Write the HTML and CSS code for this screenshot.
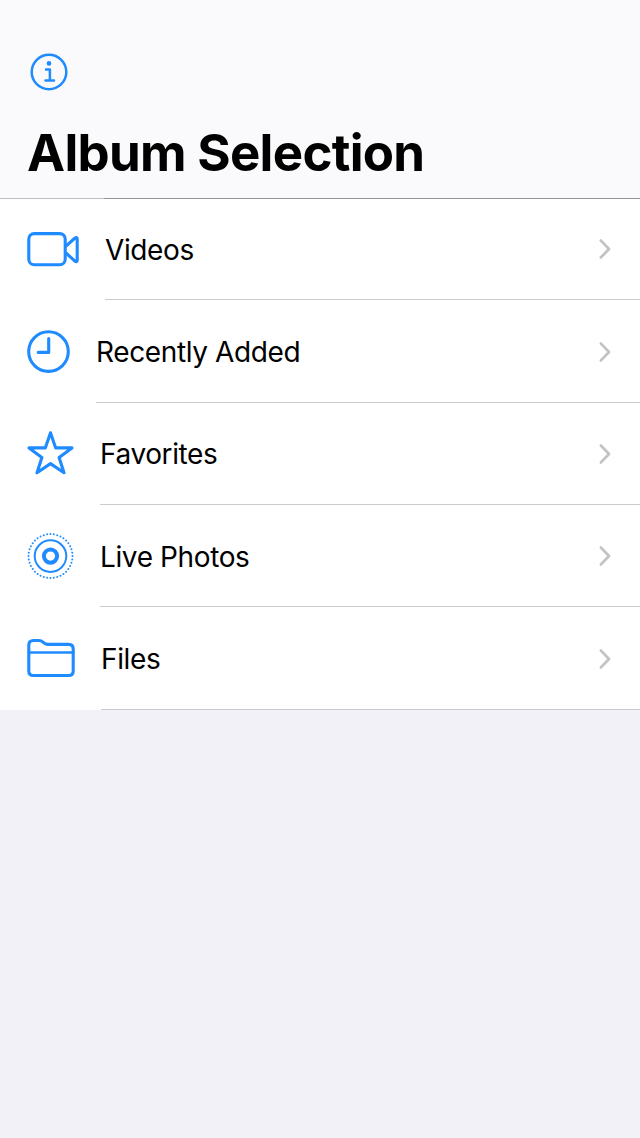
FILE: index.html
```html
<!DOCTYPE html>
<html lang="en">
<head>
<meta charset="utf-8">
<title>Album Selection</title>
<link rel="stylesheet" href="styles.css">
</head>
<body>
<header class="header">
  <svg class="info" viewBox="0 0 38 38"><circle cx="19" cy="19" r="17.3"/><path d="M16 16.6H19.9V27.4M15.5 27.5H24"/><circle class="solid" cx="19" cy="10.4" r="2.3"/></svg>
  <h1 class="title">Album Selection</h1>
</header>
<main class="list">
  <a class="row videos">
    <svg class="icon" viewBox="0 0 52 52"><rect x="1.8" y="9.6" width="36.4" height="31.2" rx="5.5"/><path d="M39 22.2L47.4 14.5Q50.2 12.2 50.2 15V36.2Q50.2 39 47.4 36.7L39 29"/></svg>
    <div class="cell"><span class="label">Videos</span><svg class="chevron" viewBox="0 0 14 22"><path d="M2.9 2.6L11 11L2.9 19.4"/></svg></div>
  </a>
  <a class="row recent">
    <svg class="icon" viewBox="0 0 52 52"><circle cx="21.5" cy="25.6" r="19.8"/><path d="M21.7 12.6V26.4H11.2"/></svg>
    <div class="cell"><span class="label">Recently Added</span><svg class="chevron" viewBox="0 0 14 22"><path d="M2.9 2.6L11 11L2.9 19.4"/></svg></div>
  </a>
  <a class="row favorites">
    <svg class="icon" viewBox="0 0 52 52"><path d="M23.5 4.8L28.7 19.9H45L32.1 29.6L37 44.8L23.5 35.6L10 44.8L14.9 29.6L2 19.9H18.3Z"/></svg>
    <div class="cell"><span class="label">Favorites</span><svg class="chevron" viewBox="0 0 14 22"><path d="M2.9 2.6L11 11L2.9 19.4"/></svg></div>
  </a>
  <a class="row live">
    <svg class="icon" viewBox="0 0 52 52"><circle class="dots" cx="23.5" cy="26.1" r="22" pathLength="400"/><circle class="ring" cx="23.5" cy="26.1" r="15.8"/><circle class="core" cx="23.5" cy="26.1" r="6.6"/></svg>
    <div class="cell"><span class="label">Live Photos</span><svg class="chevron" viewBox="0 0 14 22"><path d="M2.9 2.6L11 11L2.9 19.4"/></svg></div>
  </a>
  <a class="row files">
    <svg class="icon" viewBox="0 0 52 52"><path d="M1.8 12.2Q1.8 7.5 6.5 7.5H12Q14.3 7.5 15.7 8.8L17.3 10.2Q18.7 11.4 21 11.4H41.7Q46.2 11.4 46.2 15.9V38Q46.2 42.5 41.7 42.5H6.3Q1.8 42.5 1.8 38Z"/><path class="divider" d="M1.8 19.6H46.2"/></svg>
    <div class="cell"><span class="label">Files</span><svg class="chevron" viewBox="0 0 14 22"><path d="M2.9 2.6L11 11L2.9 19.4"/></svg></div>
  </a>
</main>
</body>
</html>
```
FILE: styles.css
```css
* { box-sizing: border-box; }
body {
  margin: 0;
  min-height: 1138px;
  background: #f2f1f7;
  color: #000;
  font-family: Inter, "Liberation Sans", sans-serif;
}
svg {
  display: block;
  flex: none;
  fill: none;
  stroke: #1f8bff;
  stroke-width: 3.1;
  stroke-linecap: round;
  stroke-linejoin: round;
}
.header {
  height: 199px;
  padding: 53px 27px 0;
  background: #fafafc;
  border-bottom: 1px solid;
  border-image: linear-gradient(to right, #bdbdc0 105px, #939396 105px) 1;
}
.info { width: 38px; height: 38px; margin-left: 3px; stroke-width: 2.5; }
.solid { fill: #1f8bff; stroke: none; }
.title {
  margin: 31px 0 0;
  font-size: 51px;
  line-height: 62px;
  font-weight: 700;
  letter-spacing: -0.7px;
  white-space: nowrap;
}
.list { background: #fff; }
.row { display: flex; height: 102px; padding-left: 27px; align-items: center; }
.icon { width: 52px; height: 52px; margin-right: 17px; }
.cell {
  flex: 1;
  align-self: stretch;
  display: flex;
  align-items: center;
  justify-content: space-between;
  padding: 1px 28px 0 0;
  border-bottom: 1px solid #cbcbcd;
}
.label {
  font-size: 28px;
  line-height: 36px;
  letter-spacing: -0.38px;
  white-space: nowrap;
}
.chevron { width: 14px; height: 22px; stroke: #c3c3c5; stroke-width: 2.8; }
.videos { height: 101px; }
.videos .icon { margin-right: 26px; }
.videos .chevron { margin-top: -1px; }
.recent, .files { height: 103px; }
.favorites .icon, .live .icon { margin-right: 21px; }
.live .label { padding-top: 1px; }
.files .icon { margin-right: 22px; }
.dots { stroke-width: 2; stroke-dasharray: 0 10; }
.ring { stroke-width: 2; }
.core { stroke-width: 4; }
.divider { stroke-width: 2.5; }
```
